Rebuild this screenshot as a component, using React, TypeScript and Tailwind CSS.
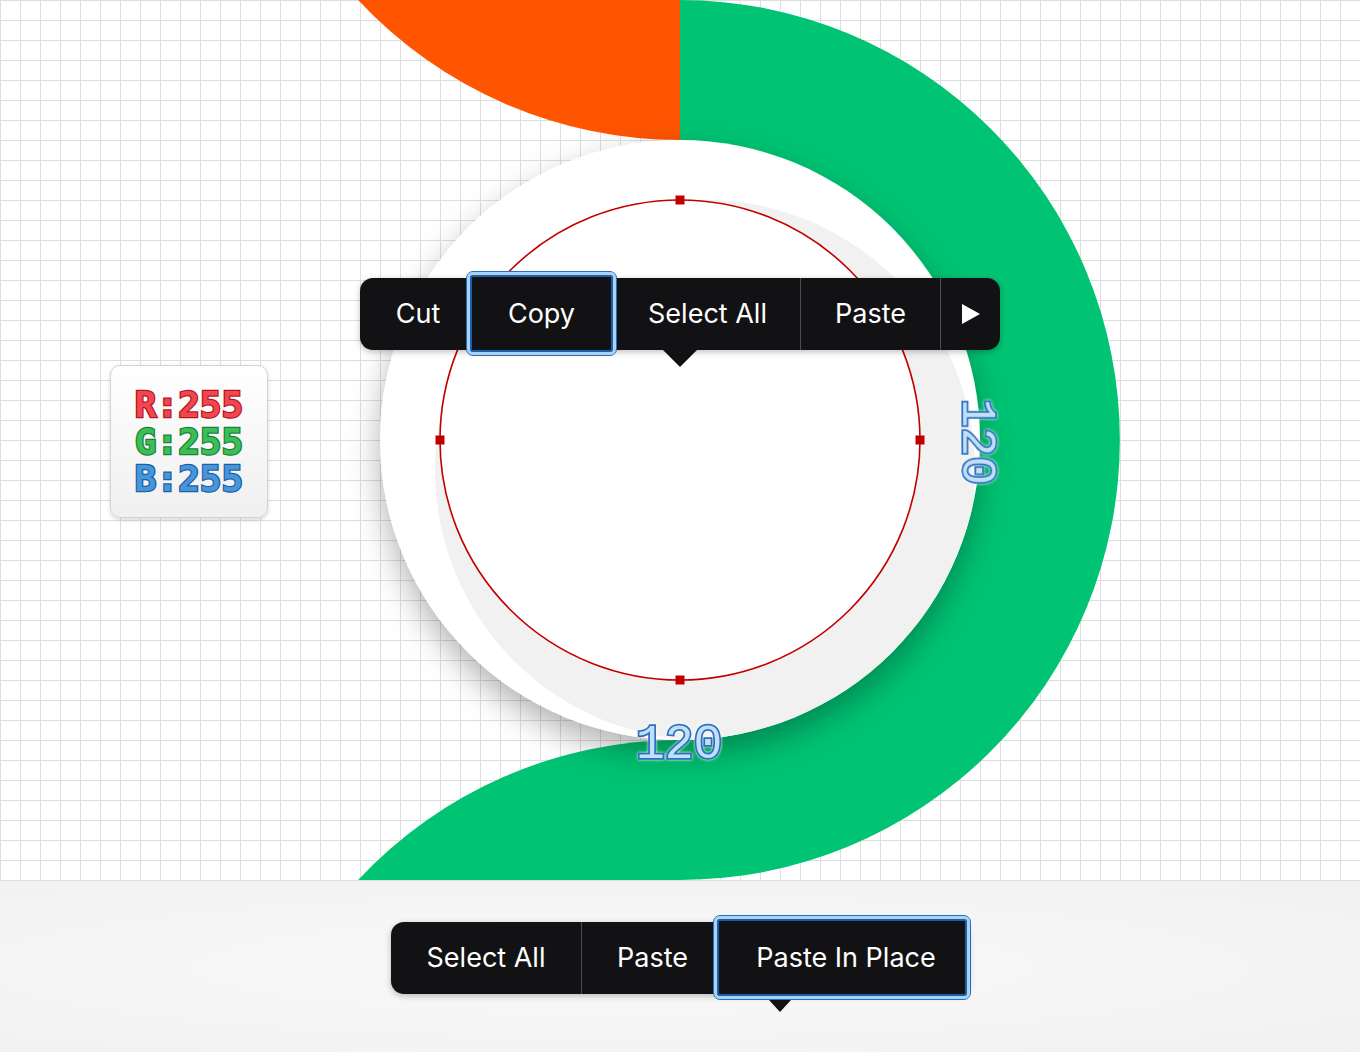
import type { ReactNode } from 'react';

type MenuItem = {
  label: ReactNode;
  width: string;
  divider?: boolean;
  active?: boolean;
  pad?: string;
};

function ContextMenu({ items, pointer }: { items: MenuItem[]; pointer: ReactNode }) {
  return (
    <div className="relative flex h-[72px] rounded-[13px] bg-[#121214] text-white text-[27px] shadow-[0_2px_6px_rgba(0,0,0,0.25)]">
      {items.map((item, i) => (
        <div
          key={i}
          className={`relative flex items-center justify-center ${item.width} ${item.pad ?? ''} ${
            item.divider ? 'border-l border-[#4d4d50]' : ''
          }`}
        >
          {item.active && (
            <div className="absolute -inset-x-px -top-[6px] -bottom-[5px] rounded-[6px] bg-[#121214] border-[3px] border-[#a8d2f6] outline outline-1 outline-[#2b6db6] shadow-[inset_0_0_0_2px_#1d5fa8]" />
          )}
          <span className="relative">{item.label}</span>
        </div>
      ))}
      {pointer}
    </div>
  );
}

function RgbBadge() {
  const line = 'block [paint-order:stroke_fill] [-webkit-text-stroke:2.5px_var(--s)]';
  return (
    <div className="absolute left-[110px] top-[365px] w-[158px] h-[153px] rounded-[10px] border border-[#d3d3d3] bg-gradient-to-b from-white to-[#f0f0f0] shadow-[0_2px_4px_rgba(0,0,0,0.15)] flex flex-col items-center justify-center font-['DejaVu_Sans_Mono',monospace] font-bold text-[36px] leading-[37px]">
      <span className={`${line} text-[#f04650] [--s:#b3161f]`}>R:255</span>
      <span className={`${line} text-[#3cbd55] [--s:#17823b]`}>G:255</span>
      <span className={`${line} text-[#4795da] [--s:#1d5fa3]`}>B:255</span>
    </div>
  );
}

function Dim({ className }: { className: string }) {
  return (
    <div
      className={`absolute font-['Liberation_Mono',monospace] slashed-zero text-[48px] leading-[48px] text-[#c2e0f9] [paint-order:stroke_fill] [-webkit-text-stroke:3.5px_#2c70bf] [filter:drop-shadow(0_0_1.5px_#ffffff)] ${className}`}
    >
      120
    </div>
  );
}

export default function App() {
  const handles = [
    [680, 200],
    [440, 440],
    [920, 440],
    [680, 680],
  ];

  return (
    <div className="w-[1360px] h-[1052px] overflow-hidden bg-white font-['Inter',sans-serif]">
      {/* canvas — grid paper with the drawing */}
      <div className="relative h-[881px] bg-white bg-[linear-gradient(to_right,#dedede_1px,transparent_1px),linear-gradient(to_bottom,#dedede_1px,transparent_1px)] bg-[size:20px_20px]">
        <svg className="absolute inset-0" width="1360" height="881" viewBox="0 0 1360 881">
          <defs>
            <filter id="discShadow" x="-30%" y="-30%" width="160%" height="170%">
              <feDropShadow dx="0" dy="14" stdDeviation="16" floodColor="#000" floodOpacity="0.3" />
            </filter>
            <clipPath id="discClip">
              <circle cx="680" cy="440" r="300" />
            </clipPath>
          </defs>
          <path d="M358.1 0 A440 440 0 0 0 680 140 L680 0 Z" fill="#ff5400" />
          <path d="M680 0 A440 440 0 0 1 680 880 Z" fill="#00c373" />
          <path d="M680 740 A440 440 0 0 0 358.1 880 L680 880 Z" fill="#00c373" />
          <circle cx="680" cy="440" r="300" fill="#ffffff" filter="url(#discShadow)" />
          <circle cx="705" cy="470" r="270" fill="#f1f1f1" clipPath="url(#discClip)" />
          <circle cx="680" cy="440" r="240" fill="#ffffff" />
          <circle cx="680" cy="440" r="240" fill="none" stroke="#c00000" strokeWidth="1.6" />
          {handles.map(([x, y]) => (
            <rect key={`${x}-${y}`} x={x - 4.5} y={y - 4.5} width="9" height="9" fill="#c00000" />
          ))}
        </svg>

        <RgbBadge />

        <Dim className="left-[636px] top-[721px]" />
        <Dim className="left-[933px] top-[418px] rotate-90" />

        <div className="absolute left-[360px] top-[278px]">
          <ContextMenu
            items={[
              { label: 'Cut', width: 'w-[108px]', pad: 'pl-2' },
              { label: 'Copy', width: 'w-[147px]', active: true },
              { label: 'Select All', width: 'w-[185px]' },
              { label: 'Paste', width: 'w-[140px]', divider: true },
              {
                label: (
                  <svg width="18" height="20" viewBox="0 0 18 20" className="block">
                    <polygon points="0,0 18,10 0,20" fill="#ffffff" />
                  </svg>
                ),
                width: 'w-[60px]',
                divider: true,
              },
            ]}
            pointer={
              <div className="absolute left-[303px] top-[72px] w-0 h-0 border-x-[17px] border-x-transparent border-t-[17px] border-t-[#121214]" />
            }
          />
        </div>
      </div>

      {/* bottom strip */}
      <div className="h-[171px] flex justify-center pt-[41px] bg-[radial-gradient(ellipse_at_45%_50%,#f9f9f9,#f1f1f1)]">
        <ContextMenu
          items={[
            { label: 'Select All', width: 'w-[190px]' },
            { label: 'Paste', width: 'w-[134px]', divider: true, pad: 'pl-2' },
            { label: 'Paste In Place', width: 'w-[254px]', active: true, pad: 'pl-2' },
          ]}
          pointer={
            <div className="absolute left-[378px] top-[78px] w-0 h-0 border-x-[11px] border-x-transparent border-t-[12px] border-t-[#121214]" />
          }
        />
      </div>
    </div>
  );
}
